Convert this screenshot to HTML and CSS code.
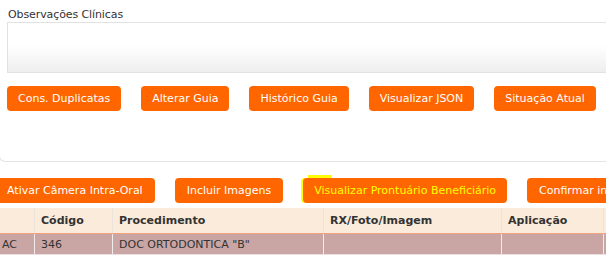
FILE: index.html
```html
<!DOCTYPE html>
<html lang="pt-BR">
<head>
    <meta charset="UTF-8">
    <title>Guia - Observações</title>
    <link rel="stylesheet" href="styles.css">
</head>
<body>
    <div class="panel">
        <label class="field-label" for="obs">Observações Clínicas</label>
        <textarea id="obs" class="obs-box"></textarea>

        <div class="actions">
            <button class="btn">Cons. Duplicatas</button>
            <button class="btn">Alterar Guia</button>
            <button class="btn">Histórico Guia</button>
            <button class="btn">Visualizar JSON</button>
            <button class="btn">Situação Atual</button>
        </div>
    </div>

    <div class="lower">
        <div class="actions">
            <button class="btn">Ativar Câmera Intra-Oral</button>
            <button class="btn">Incluir Imagens</button>
            <button class="btn btn-focus">Visualizar Prontuário Beneficiário</button>
            <button class="btn">Confirmar inclusão</button>
        </div>

        <table class="grid">
            <thead>
                <tr>
                    <th class="col-dente"></th>
                    <th class="col-codigo">Código</th>
                    <th class="col-proc">Procedimento</th>
                    <th class="col-rx">RX/Foto/Imagem</th>
                    <th class="col-aplic">Aplicação</th>
                    <th></th>
                </tr>
            </thead>
            <tbody>
                <tr>
                    <td>AC</td>
                    <td>346</td>
                    <td>DOC ORTODONTICA "B"</td>
                    <td></td>
                    <td></td>
                    <td></td>
                </tr>
            </tbody>
        </table>
    </div>
</body>
</html>
```

FILE: styles.css
```css
body {
    margin: 0;
    font-family: "DejaVu Sans", Verdana, sans-serif;
    font-size: 11px;
    color: #333;
    background: #fff;
    overflow: hidden;
}

.panel {
    width: 660px;
    margin-left: -1px;
    padding: 8px 0 50px 8px;
    border: 1px solid #e4e4e4;
    border-top: none;
    border-radius: 0 0 6px 6px;
    box-sizing: border-box;
}

.field-label {
    display: block;
    line-height: 14px;
    letter-spacing: -0.1px;
    color: #333;
}

.obs-box {
    display: block;
    width: 640px;
    height: 51px;
    margin: 0 0 13px -1px;
    border: 1px solid #e2e2e2;
    box-sizing: border-box;
    background: linear-gradient(#fff 45%, #eeeeee 100%);
    resize: none;
}

.actions {
    display: flex;
    gap: 20px;
    white-space: nowrap;
}

.panel .actions {
    margin-left: -1px;
}

.btn {
    height: 25px;
    padding: 0 11px;
    border: none;
    border-radius: 4px;
    background: #ff6600;
    color: #fff;
    font-family: inherit;
    font-size: 11px;
    cursor: pointer;
}

.lower .btn {
    padding: 0 12px;
}

.lower .btn-focus {
    position: relative;
    padding: 0 11px;
    color: #ffff00;
    box-shadow: -2px 0 0 #ffff00;
}

.btn-focus::before {
    content: "";
    position: absolute;
    left: 5px;
    top: -3px;
    width: 24px;
    height: 4px;
    background: #ffff00;
    z-index: -1;
}

.lower {
    margin: 16px 0 0 -5px;
}

.grid {
    margin-top: 5px;
    margin-left: 1px;
    border-collapse: collapse;
    width: 700px;
    table-layout: fixed;
}

.grid th,
.grid td {
    padding: 0 6px;
    text-align: left;
    white-space: nowrap;
}

.grid th {
    height: 25px;
    background: #fbebdb;
    font-weight: bold;
    border-left: 1px solid #ece4dc;
    border-bottom: 1px solid #f2a37e;
}

.grid td {
    height: 20px;
    background: #c9a6a4;
    border-left: 1px solid #f3ecec;
    border-bottom: 1px solid #e8e0e0;
}

.grid th:first-child,
.grid td:first-child {
    border-left: none;
}

.col-dente { width: 26px; }
.col-codigo { width: 65px; }
.col-proc { width: 198px; }
.col-rx { width: 165px; }
.col-aplic { width: 89px; }
```
